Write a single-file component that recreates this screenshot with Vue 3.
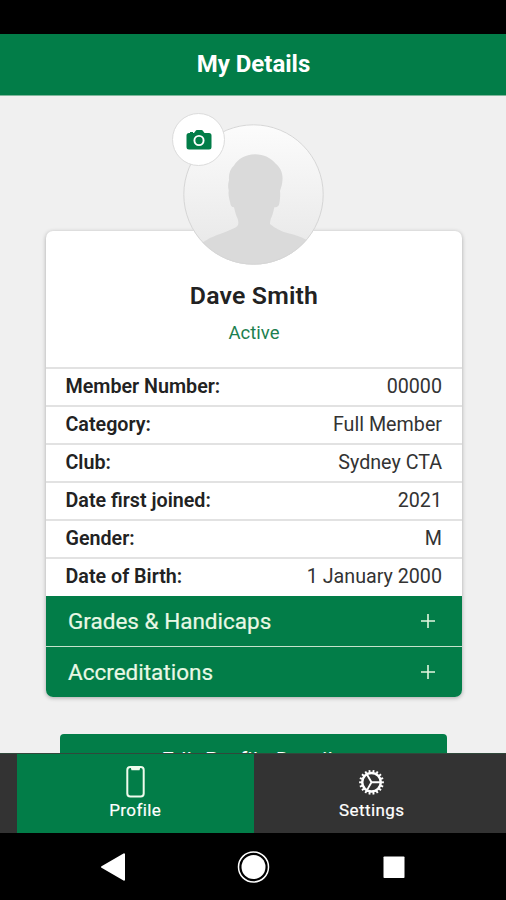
<script setup>
import { ref } from 'vue'

const details = [
  { label: 'Member Number:', value: '00000' },
  { label: 'Category:', value: 'Full Member' },
  { label: 'Club:', value: 'Sydney CTA' },
  { label: 'Date first joined:', value: '2021' },
  { label: 'Gender:', value: 'M' },
  { label: 'Date of Birth:', value: '1 January 2000' },
]
const sections = ['Grades & Handicaps', 'Accreditations']
const activeTab = ref('profile')
const teeth = Array.from({ length: 18 }, (_, i) => i * 20)
</script>

<template>
  <div class="phone">
    <div class="status-bar"></div>
    <header class="header"><h1>My Details</h1></header>
    <main class="content">
      <div class="portrait">
        <svg class="avatar" viewBox="0 0 142 142">
          <defs>
            <linearGradient id="shade" x1="0" y1="0" x2="0" y2="1">
              <stop offset="0" stop-color="#fcfcfc" />
              <stop offset="1" stop-color="#e6e6e6" />
            </linearGradient>
            <clipPath id="round"><circle cx="71.500" cy="70.500" r="70" /></clipPath>
          </defs>
          <circle cx="71.500" cy="70.500" r="70" fill="url(#shade)" />
          <path
            clip-path="url(#round)"
            fill="#dadada"
            d="M73 30.300C82 30.500 89 34 93.500 39.500C99 44 101 50 100.500 56C100.300 60 99 64 98 67C98.500 71 98 77 97 81C95.500 83 94 83.300 92.300 83.300C91.500 87 91 90 89.700 92.700C88.500 95 88 97 88 100C93 104 99 107.500 106.300 109.300C113 111 119 112.500 124.700 116L142 130V142H0V130L24.700 116C29 113 33 112 38 110C42 108.500 46 107 49.700 105.300C53 104 55.500 103 56.300 100C56.500 97 56 95 54.700 92.700C53.500 90 53 87 52 83.300C49.500 83.300 48.500 81.500 48 78C47 74 46 70 46.800 66.500C45.700 63 46 60 47 56C46.500 50 48 45 52 41.500C56 35 63 30.500 73 30.300Z"
          />
          <circle cx="71.500" cy="70.500" r="69.700" fill="none" stroke="#d6d6d6" />
        </svg>
        <button class="camera" aria-label="Change photo">
          <svg viewBox="0 0 26 22">
            <path fill="#027d48" d="M3 4H4V3H7V4H8L9.500 2Q10 1 11 1H15.500Q16.500 1 17 2L18.500 4H23Q25.500 4 25.500 6.500V18Q25.500 20.500 23 20.500H3Q.5 20.500 .5 18V6.500Q.5 4 3 4Z" />
            <circle cx="13" cy="11.500" r="4.600" fill="none" stroke="#fff" stroke-width="1.900" />
          </svg>
        </button>
      </div>
      <section class="card">
        <div class="summary">
          <h2>Dave Smith</h2>
          <p>Active</p>
        </div>
        <dl class="details">
          <div v-for="row in details" :key="row.label" class="row">
            <dt>{{ row.label }}</dt>
            <dd>{{ row.value }}</dd>
          </div>
        </dl>
        <button v-for="name in sections" :key="name" class="section">
          <span>{{ name }}</span>
          <svg viewBox="0 0 16 16"><path d="M8 1V15M1 8H15" stroke="#e3f6df" stroke-width="1.600" /></svg>
        </button>
      </section>
      <button class="edit">Edit Profile Details</button>
    </main>
    <nav class="tabs">
      <button class="tab" :class="{ active: activeTab === 'profile' }" @click="activeTab = 'profile'">
        <svg class="phone-icon" viewBox="0 0 20 34">
          <rect x="2.300" y="2" width="16.400" height="29.500" rx="3" fill="none" stroke="#effbed" stroke-width="2" />
          <path d="M5.500 2H15.500L14.500 5.300H6.500Z" fill="#effbed" />
        </svg>
        <span>Profile</span>
      </button>
      <button class="tab" :class="{ active: activeTab === 'settings' }" @click="activeTab = 'settings'">
        <svg class="gear-icon" viewBox="0 0 28 34">
          <g fill="none" stroke="#fff">
            <circle cx="13.500" cy="17.300" r="9.300" stroke-width="2.500" />
            <path v-for="a in teeth" :key="a" d="M13.500 7.500V4.900" stroke-width="1.900" :transform="`rotate(${a + 10} 13.500 17.300)`" />
            <path d="M13.500 17.300H22.500M13.500 17.300L9 9.500M13.500 17.300L9 25.100" stroke-width="1.900" />
          </g>
        </svg>
        <span>Settings</span>
      </button>
    </nav>
    <div class="system-nav">
      <svg viewBox="0 0 28 32"><path d="M24 3.300V28.700L2 16Z" fill="#fff" stroke="#fff" stroke-width="2" stroke-linejoin="round" /></svg>
      <svg viewBox="0 0 32 32"><circle cx="14.500" cy="16" r="15" fill="none" stroke="#fff" stroke-width="1.500" /><circle cx="14.500" cy="16" r="12" fill="#fff" /></svg>
      <svg viewBox="0 0 24 32"><rect x="1.500" y="5.500" width="21" height="21.500" rx=".8" fill="#fff" /></svg>
    </div>
  </div>
</template>

<style>
body {
  margin: 0;
  background: #000;
}
</style>

<style scoped>
.phone {
  display: flex;
  flex-direction: column;
  width: 506px;
  height: 900px;
  overflow: hidden;
  background: #000;
  font-family: Roboto, "Liberation Sans", sans-serif;
  color: #222;
}
* {
  box-sizing: border-box;
}
h1, h2, p, dl, dd {
  margin: 0;
}
button {
  border: 0;
  padding: 0;
  font: inherit;
  color: inherit;
}
svg {
  display: block;
  flex: none;
  overflow: visible;
}
.status-bar {
  height: 34px;
  flex: none;
}
.header {
  height: 62px;
  flex: none;
  display: flex;
  align-items: center;
  justify-content: center;
  padding: 0 0 2px 1px;
  background: #027d48;
  border-bottom: 1px solid #7fb79c;
  color: #fff;
}
h1 {
  font-size: 24px;
  font-weight: 700;
}
.content {
  height: 657px;
  flex: none;
  overflow: hidden;
  display: flex;
  flex-direction: column;
  align-items: center;
  background: #f0f0f0;
}
.portrait {
  position: relative;
  z-index: 1;
  flex: none;
  width: 142px;
  height: 142px;
  margin-top: 28px;
}
.avatar {
  width: 142px;
  height: 142px;
}
.camera {
  position: absolute;
  left: -10px;
  top: -11px;
  width: 53px;
  height: 53px;
  display: flex;
  align-items: center;
  justify-content: center;
  border: 1px solid #dcdcdc;
  border-radius: 50%;
  background: #fff;
}
.camera svg {
  width: 26px;
  height: 22px;
}
.card {
  flex: none;
  width: 416px;
  height: 466px;
  margin-top: -35px;
  margin-left: 2px;
  overflow: hidden;
  border-radius: 7px;
  background: #fff;
  box-shadow: 0 1px 4px rgba(0, 0, 0, 0.3);
}
.summary {
  height: 136px;
  padding-top: 50px;
  text-align: center;
}
h2 {
  font-size: 24.800px;
  font-weight: 600;
  line-height: 30px;
  letter-spacing: 0.2px;
}
.summary p {
  margin-top: 10px;
  font-size: 18.500px;
  line-height: 24px;
  color: #1c7f50;
}
.details {
  padding-bottom: 1px;
}
.row {
  height: 38px;
  display: flex;
  justify-content: space-between;
  align-items: center;
  padding: 0 20px 2px 19.500px;
  border-top: 2px solid #e2e2e2;
  font-size: 19.700px;
}
dt {
  font-weight: 600;
}
dd {
  color: #333;
}
.section {
  width: 100%;
  height: 50px;
  display: flex;
  align-items: center;
  justify-content: space-between;
  padding: 0 26px 1px 22px;
  background: #027d48;
  color: #e9f8e5;
  font-size: 22.500px;
  -webkit-text-stroke: 0.2px #e9f8e5;
}
.section + .section {
  height: 51px;
  padding-bottom: 1px;
  border-top: 1px solid #c5e3cc;
}
.section svg {
  width: 16px;
  height: 16px;
}
.edit {
  flex: none;
  width: 387px;
  height: 53px;
  margin-top: 37px;
  border-radius: 4px;
  background: #027d48;
  color: #fff;
  font-size: 22px;
  letter-spacing: 0.200px;
}
.tabs {
  height: 80px;
  flex: none;
  display: flex;
  padding: 0 16px 0 17px;
  background: #333;
  border-top: 1px solid #31483b;
}
.tab {
  flex: 1;
  display: flex;
  flex-direction: column;
  align-items: center;
  padding-top: 11px;
  background: #333;
  color: #fff;
  font-size: 17px;
  letter-spacing: 0.4px;
}
.tab.active {
  background: #027d48;
}
.tab span {
  line-height: 22px;
  -webkit-text-stroke: 0.2px #fff;
}
.phone-icon {
  width: 20px;
  height: 34px;
}
.gear-icon {
  width: 28px;
  height: 34px;
}
.system-nav {
  flex: 1;
  display: flex;
  align-items: center;
  justify-content: space-between;
  padding: 0 100px;
}
.system-nav svg {
  height: 32px;
}
</style>
